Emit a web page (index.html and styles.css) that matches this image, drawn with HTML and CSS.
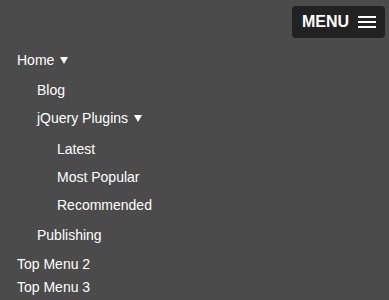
FILE: index.html
```html
<!DOCTYPE html>
<html lang="en">

<head>
    <meta charset="UTF-8">
    <meta name="viewport" content="width=device-width, initial-scale=1.0">
    <title>Menu</title>
    <link rel="stylesheet" href="styles.css">
</head>

<body>
    <div id="topo">
        <a id="menu-botao">MENU
            <span class="barras"><i></i><i></i><i></i></span>
        </a>
    </div>

    <ul id="menu">
        <li>
            <a>Home <span class="seta"></span></a>
            <ul class="sub">
                <li><a>Blog</a></li>
                <li>
                    <a>jQuery Plugins <span class="seta"></span></a>
                    <ul class="sub sub2">
                        <li><a>Latest</a></li>
                        <li><a>Most Popular</a></li>
                        <li><a>Recommended</a></li>
                    </ul>
                </li>
                <li><a>Publishing</a></li>
            </ul>
        </li>
        <li><a>Top Menu 2</a></li>
        <li><a>Top Menu 3</a></li>
    </ul>
</body>

</html>
```

FILE: styles.css
```css
* {
    font-family: "Liberation Sans", Arial, sans-serif;
}

body {
    margin: 0;
    background-color: #4b4b4b;
    color: #fff;
    font-size: 14px;
}

#topo {
    display: flex;
    justify-content: flex-end;
    padding: 6px 4px 0 0;
}

#menu-botao {
    display: flex;
    align-items: center;
    gap: 9px;
    height: 32px;
    padding: 0 10px;
    box-sizing: border-box;
    width: 93px;
    background-color: #222;
    border-radius: 4px;
    font-size: 16px;
    font-weight: 700;
}

.barras {
    display: flex;
    flex-direction: column;
    gap: 3px;
}

.barras i {
    display: block;
    width: 18px;
    height: 2px;
    background-color: #fff;
}

#menu {
    list-style: none;
    margin: 11px 0 0;
    padding: 0 0 0 17px;
}

#menu ul {
    list-style: none;
    margin: 0;
    padding: 0 0 0 20px;
}

#menu a {
    display: block;
    line-height: 23px;
}

#menu .sub {
    padding-top: 4px;
    padding-bottom: 4px;
}

#menu .sub a {
    line-height: 28px;
}

#menu .sub2 {
    padding-top: 3px;
    padding-bottom: 2px;
}

/* setinha do submenu */
.seta {
    display: inline-block;
    margin-left: 2px;
    vertical-align: 1px;
    border-left: 4px solid transparent;
    border-right: 4px solid transparent;
    border-top: 7px solid #fff;
}
```
